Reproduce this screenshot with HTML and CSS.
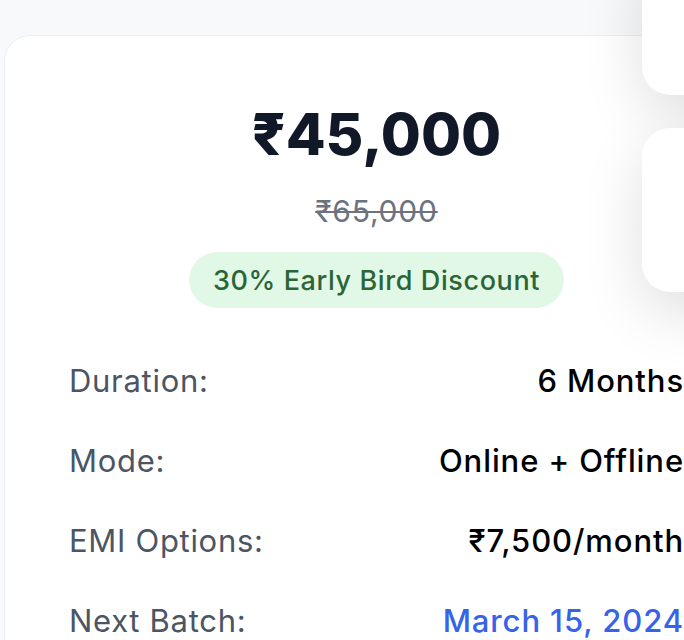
FILE: index.html
```html
<!DOCTYPE html>
<html lang="en">
<head>
<meta charset="utf-8">
<title>Pricing</title>
<link rel="stylesheet" href="styles.css">
</head>
<body>
<div class="page">
  <section class="card">
    <div class="price">₹45,000</div>
    <div class="old-price">₹65,000</div>
    <div class="badge-wrap"><span class="badge">30% Early Bird Discount</span></div>
    <div class="details">
      <div class="row"><span class="label">Duration:</span><span class="value">6 Months</span></div>
      <div class="row"><span class="label">Mode:</span><span class="value">Online + Offline</span></div>
      <div class="row"><span class="label">EMI Options:</span><span class="value">₹7,500/month</span></div>
      <div class="row"><span class="label">Next Batch:</span><span class="value accent">March 15, 2024</span></div>
    </div>
  </section>
  <div class="side-card side-card-1"></div>
  <div class="side-card side-card-2"></div>
</div>
</body>
</html>
```
FILE: styles.css
```css
html, body {
  margin: 0;
  padding: 0;
}
body {
  background: #f8f9fb;
  font-family: "Inter", "Open Sans", sans-serif;
  overflow: hidden;
  width: 684px;
  height: 640px;
}
.page {
  position: relative;
  width: 684px;
  height: 640px;
  overflow: hidden;
}
.card {
  margin: 35px 0 0 4px;
  width: 746px;
  box-sizing: border-box;
  padding: 62px 65px 0 64px;
  background: #ffffff;
  border: 1px solid #eceef2;
  border-radius: 26px;
  height: 700px;
}
.price {
  text-align: center;
  font-size: 58px;
  font-weight: 800;
  line-height: 72px;
  color: #111827;
}
.old-price {
  margin-top: 21px;
  text-align: center;
  font-size: 30px;
  line-height: 40px;
  letter-spacing: 0.8px;
  color: #6b7280;
  text-decoration: line-through;
  text-decoration-thickness: 2px;
}
.badge-wrap {
  margin-top: 21px;
  display: flex;
  justify-content: center;
}
.badge {
  display: inline-flex;
  align-items: center;
  height: 56px;
  padding: 0 24px;
  border-radius: 28px;
  background: #e2f8e6;
  color: #2b6536;
  font-size: 27px;
  letter-spacing: 0.6px;
  font-weight: 500;
}
.details {
  margin-top: 32px;
}
.row {
  display: flex;
  justify-content: space-between;
  align-items: center;
  height: 80px;
  font-size: 31px;
  letter-spacing: 0.7px;
}
.label {
  color: #4b5563;
}
.value {
  color: #000000;
  font-weight: 500;
  letter-spacing: 0.9px;
}
.value.accent {
  color: #3563e9;
}
.side-card {
  position: absolute;
  left: 642px;
  width: 220px;
  background: #ffffff;
  border-radius: 28px;
  box-shadow: 0 20px 60px rgba(0, 0, 0, 0.13);
}
.side-card-1 {
  top: -60px;
  height: 155px;
}
.side-card-2 {
  top: 128px;
  height: 164px;
}
```
